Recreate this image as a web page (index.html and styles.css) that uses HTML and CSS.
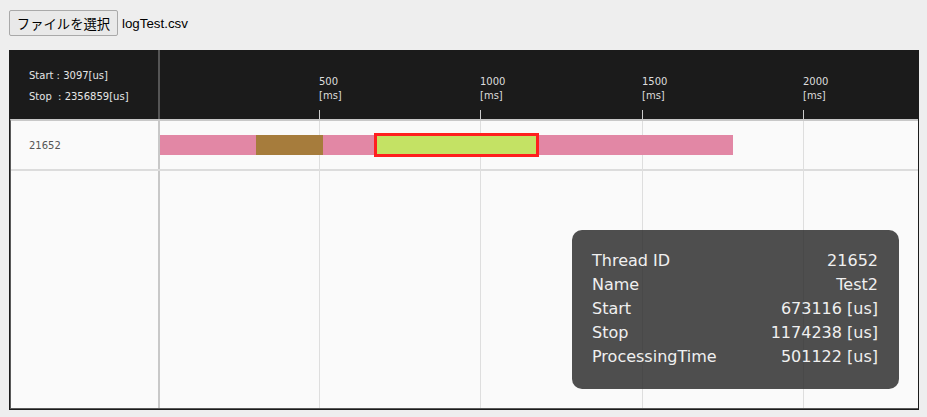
FILE: index.html
```html
<!DOCTYPE html>
<html lang="ja">
<head>
<meta charset="utf-8">
<title>logTest</title>
<link rel="stylesheet" href="styles.css">
</head>
<body>
<div class="picker">
  <button class="file-btn" type="button">ファイルを選択</button>
  <span class="file-name">logTest.csv</span>
</div>
<div class="chart">
  <div class="chart-head">
    <div class="range">
      <div>Start : 3097[us]</div>
      <div>Stop&nbsp; : 2356859[us]</div>
    </div>
    <div class="axis">
      <div class="tick" style="left:159px"><span>500<br>[ms]</span></div>
      <div class="tick" style="left:320px"><span>1000<br>[ms]</span></div>
      <div class="tick" style="left:482px"><span>1500<br>[ms]</span></div>
      <div class="tick" style="left:643px"><span>2000<br>[ms]</span></div>
    </div>
  </div>
  <div class="chart-body">
    <div class="grid">
      <div class="gline" style="left:159px"></div>
      <div class="gline" style="left:320px"></div>
      <div class="gline" style="left:482px"></div>
      <div class="gline" style="left:643px"></div>
    </div>
    <div class="row">
      <div class="label">21652</div>
      <div class="track">
        <div class="bar bar-pink" style="left:0;width:573px"></div>
        <div class="bar bar-brown" style="left:96px;width:67px"></div>
        <div class="bar bar-selected" style="left:214px;width:165px"></div>
      </div>
    </div>
    <div class="filler">
      <div class="label"></div>
      <div class="track"></div>
    </div>
  </div>
  <div class="tooltip">
    <div class="tip-row"><span>Thread ID</span><span>21652</span></div>
    <div class="tip-row"><span>Name</span><span>Test2</span></div>
    <div class="tip-row"><span>Start</span><span>673116 [us]</span></div>
    <div class="tip-row"><span>Stop</span><span>1174238 [us]</span></div>
    <div class="tip-row"><span>ProcessingTime</span><span>501122 [us]</span></div>
  </div>
</div>
</body>
</html>
```

FILE: styles.css
```css
html, body {
  margin: 0;
  padding: 0;
}
body {
  background: #eeeeee;
  padding: 10px 8px 0 9px;
  height: 417px;
  box-sizing: border-box;
  overflow: hidden;
  font-family: "DejaVu Sans", sans-serif;
}
.picker {
  display: flex;
  align-items: center;
  height: 26px;
  gap: 4px;
}
.file-btn {
  height: 26px;
  width: 109px;
  padding: 0;
  margin: 0;
  background: #e9e9e9;
  border: 1px solid #a9a9a9;
  border-radius: 2px;
  font-family: "Noto Sans CJK JP", sans-serif;
  font-size: 13.33px;
  color: #000;
}
.file-name {
  font-family: "Liberation Sans", Arial, sans-serif;
  font-size: 13.33px;
  color: #000;
}
.chart {
  position: relative;
  margin-top: 14px;
  width: 910px;
  height: 360px;
  box-sizing: border-box;
  border: 1px solid #1b1b1b;
  border-top: 0;
  display: flex;
  flex-direction: column;
  background: #fafafa;
}
.chart-head {
  height: 69px;
  background: #1b1b1b;
  display: flex;
  margin: 0 -1px;
  padding-left: 1px;
}
.range {
  width: 148px;
  border-right: 2px solid #555555;
  box-sizing: border-box;
  width: 150px;
  padding: 15px 0 0 19px;
  color: #e6e6e6;
  font-size: 10px;
  line-height: 21px;
  white-space: nowrap;
}
.axis {
  position: relative;
  flex: 1;
}
.tick {
  position: absolute;
  top: 0;
  bottom: 0;
  width: 1px;
}
.tick::after {
  content: "";
  position: absolute;
  left: 0;
  bottom: 0;
  width: 1px;
  height: 9px;
  background: #cccccc;
}
.tick span {
  position: absolute;
  left: 0;
  top: 25px;
  font-size: 10px;
  line-height: 14px;
  color: #dddddd;
  white-space: nowrap;
}
.chart-body {
  position: relative;
  flex: 1;
  display: flex;
  flex-direction: column;
  border-top: 2px solid #c8c8c8;
  border-left: 1px solid #5a5a5a;
  border-bottom: 1px solid #5a5a5a;
}
.grid {
  position: absolute;
  left: 149px;
  right: 0;
  top: 0;
  bottom: 0;
}
.gline {
  position: absolute;
  top: 0;
  bottom: 0;
  width: 1px;
  background: #dedede;
}
.row {
  display: flex;
  height: 50px;
  box-sizing: border-box;
  border-bottom: 2px solid #dcdcdc;
}
.filler {
  display: flex;
  flex: 1;
}
.label {
  width: 149px;
  box-sizing: border-box;
  border-right: 2px solid #c8c8c8;
  padding-left: 18px;
  font-size: 10px;
  color: #555555;
  display: flex;
  align-items: center;
  position: relative;
}
.track {
  position: relative;
  flex: 1;
}
.bar {
  position: absolute;
  top: 14px;
  height: 20px;
}
.bar-pink {
  background: #e287a5;
}
.bar-brown {
  background: #a67c3c;
}
.bar-selected {
  top: 12px;
  height: 24px;
  box-sizing: border-box;
  background: #c4e264;
  border: 3px solid #ff1f1f;
}
.tooltip {
  position: absolute;
  left: 562px;
  top: 180px;
  width: 327px;
  height: 159px;
  box-sizing: border-box;
  padding: 19px 21px 0 20px;
  border-radius: 10px;
  background: rgba(40, 40, 40, 0.82);
  color: #f0f0f0;
  font-size: 16px;
  line-height: 24px;
}
.tip-row {
  display: flex;
  justify-content: space-between;
}
```
